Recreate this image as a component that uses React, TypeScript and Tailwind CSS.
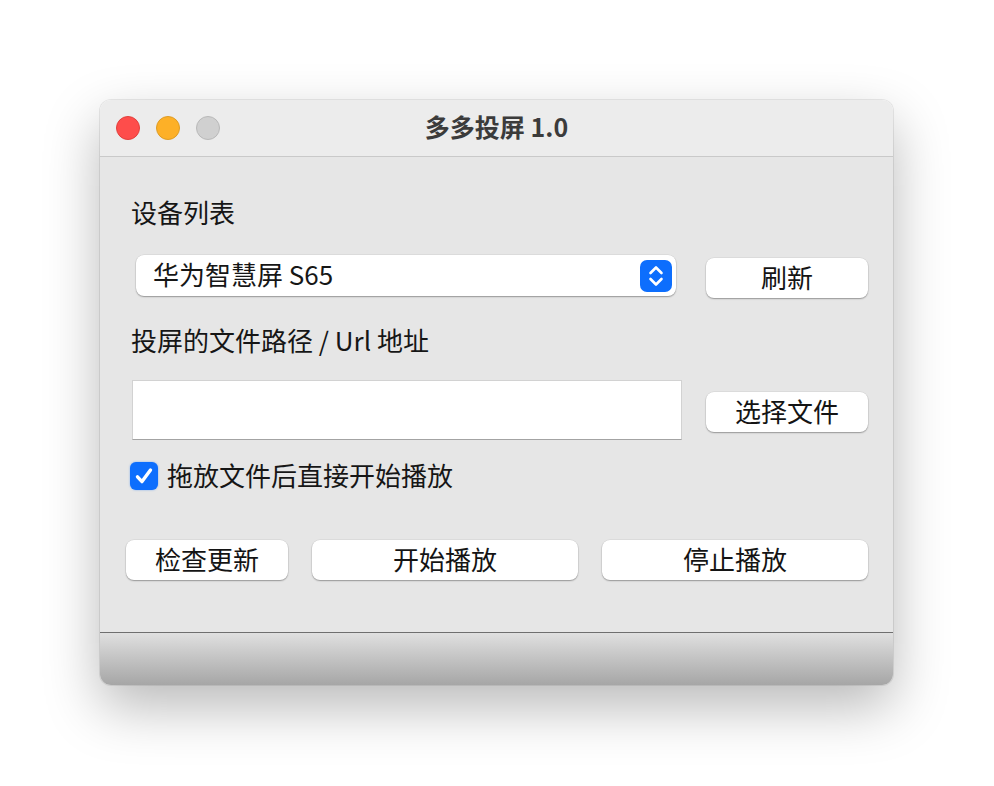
import React from "react";

const font = { fontFamily: '"Noto Sans CJK SC", "Noto Sans", sans-serif' };

function Btn({ children, className = "" }: { children: React.ReactNode; className?: string }) {
  return (
    <div
      className={`flex h-[40px] items-center justify-center rounded-[8px] bg-white pb-[3px] text-[26px] leading-none text-[#141414] shadow-[0_1px_1.5px_rgba(0,0,0,0.32),0_0_0_0.5px_rgba(0,0,0,0.08)] ${className}`}
    >
      {children}
    </div>
  );
}

export default function App() {
  return (
    <div className="h-[786px] w-[994px] bg-white pl-[100px] pt-[100px]" style={font}>
      <div className="flex h-[585px] w-[793px] flex-col overflow-hidden rounded-[11px] shadow-[0_22px_55px_rgba(0,0,0,0.28),0_0_0_1px_rgba(0,0,0,0.08)]">
        {/* Title bar */}
        <div className="relative flex h-[57px] shrink-0 items-center border-b border-[#c9c9c9] bg-[#ececec]">
          <div className="absolute left-[16px] top-[16px] flex gap-[16px]">
            <div className="h-[24px] w-[24px] rounded-full border border-[#e2403c] bg-[#fe4d4b]" />
            <div className="h-[24px] w-[24px] rounded-full border border-[#de9c25] bg-[#fdb027]" />
            <div className="h-[24px] w-[24px] rounded-full border border-[#b9b9b9] bg-[#d0d0d0]" />
          </div>
          <div className="w-full pb-[4px] text-center text-[25px] font-bold leading-none text-[#3b3b3b]">
            多多投屏 1.0
          </div>
        </div>

        {/* Body */}
        <div className="flex flex-1 flex-col bg-[#e6e6e6] pl-[26px] pr-[25px] text-[#161616]">
          <div className="ml-[5px] mt-[39px] text-[26px] leading-[32px]">设备列表</div>

          <div className="mt-[27px] flex items-start">
            <div className="ml-[10px] flex h-[41px] w-[540px] items-center justify-between rounded-[8px] bg-white pl-[17px] pr-[4px] shadow-[0_1px_1.5px_rgba(0,0,0,0.32),0_0_0_0.5px_rgba(0,0,0,0.08)]">
              <span className="pb-[3px] text-[26px] leading-none text-[#161616]">华为智慧屏 S65</span>
              <div className="flex h-[32px] w-[32px] items-center justify-center rounded-[7px] bg-[#0d6efd]">
                <svg width="18" height="24" viewBox="0 0 18 24" fill="none">
                  <path d="M3.5 9 L9 3.5 L14.5 9" stroke="white" strokeWidth="2.6" strokeLinecap="round" strokeLinejoin="round" />
                  <path d="M3.5 15 L9 20.5 L14.5 15" stroke="white" strokeWidth="2.6" strokeLinecap="round" strokeLinejoin="round" />
                </svg>
              </div>
            </div>
            <Btn className="ml-[30px] mt-[3px] w-[162px]">刷新</Btn>
          </div>

          <div className="ml-[5px] mt-[26px] text-[26px] leading-[32px]">投屏的文件路径 / Url 地址</div>

          <div className="mt-[24px] flex items-start">
            <div className="ml-[6px] h-[60px] w-[550px] border border-[#d2d2d2] border-b-[#a3a3a3] bg-white" />
            <Btn className="ml-[24px] mt-[12px] w-[162px]">选择文件</Btn>
          </div>

          <div className="mt-[20px] flex h-[32px] items-center">
            <div className="ml-[4px] flex h-[28px] w-[28px] items-center justify-center rounded-[6px] bg-[#0d6efd] shadow-[0_0_2px_rgba(13,110,253,0.5)]">
              <svg width="24" height="24" viewBox="0 0 24 24" fill="none">
                <path d="M5.5 12.8 L10 17.6 L18.5 6" stroke="white" strokeWidth="3.4" strokeLinecap="round" strokeLinejoin="round" />
              </svg>
            </div>
            <span className="ml-[9px] pb-[3px] text-[26px] leading-[32px]">拖放文件后直接开始播放</span>
          </div>

          <div className="mt-[48px] flex gap-[24px]">
            <Btn className="w-[162px]">检查更新</Btn>
            <Btn className="w-[266px]">开始播放</Btn>
            <Btn className="w-[266px]">停止播放</Btn>
          </div>
        </div>

        {/* Bottom bar */}
        <div className="h-[53px] shrink-0 border-t border-[#6f6f6f] bg-gradient-to-b from-[#e0e0e0] to-[#a6a6a6]" />
      </div>
    </div>
  );
}
